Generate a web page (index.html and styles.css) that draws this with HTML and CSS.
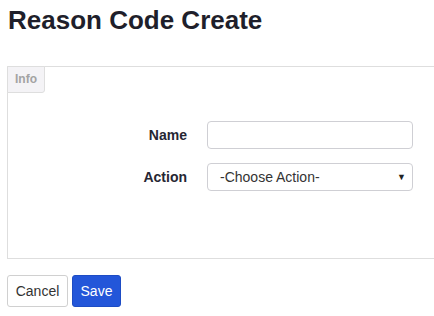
FILE: index.html
```html
<!DOCTYPE html>
<html>
<head>
<meta charset="utf-8">
<link rel="stylesheet" href="styles.css">
</head>
<body>
<h1 class="title">Reason Code Create</h1>
<div class="panel">
  <div class="tab">Info</div>
  <div class="form">
    <div class="row">
      <label class="label">Name</label>
      <div class="input"></div>
    </div>
    <div class="row">
      <label class="label">Action</label>
      <div class="input select"><span>-Choose Action-</span><span class="arrow">▼</span></div>
    </div>
  </div>
</div>
<div class="actions">
  <button class="btn cancel">Cancel</button>
  <button class="btn save">Save</button>
</div>
</body>
</html>
```
FILE: styles.css
```css
html, body { margin: 0; padding: 0; }
body {
  background: #fff;
  font-family: "Liberation Sans", Arial, sans-serif;
  color: #222;
  padding: 0 0 0 7px;
  overflow: hidden;
  width: 434px;
  height: 316px;
  box-sizing: border-box;
}
.title {
  margin: 0;
  padding: 5px 0 0 1px;
  font-size: 26px;
  line-height: 30px;
  font-weight: bold;
  color: #1f1f2b;
}
.panel {
  margin-top: 31px;
  border: 1px solid #dedede;
  border-right: none;
  height: 193px;
  box-sizing: border-box;
}
.tab {
  width: 38px;
  height: 27px;
  margin: -1px 0 0 -1px;
  box-sizing: border-box;
  border: 1px solid #dedede;
  border-radius: 0 0 3px 0;
  background: #f4f3f6;
  color: #a3a3a3;
  font-size: 12px;
  font-weight: bold;
  line-height: 25px;
  padding-left: 7px;
}
.form {
  display: flex;
  flex-direction: column;
  gap: 14px;
  padding-top: 28px;
}
.row {
  display: flex;
  align-items: center;
}
.label {
  width: 179px;
  text-align: right;
  font-size: 14px;
  font-weight: bold;
  color: #262633;
  margin-right: 20px;
}
.input {
  width: 206px;
  height: 28px;
  box-sizing: border-box;
  border: 1px solid #cfcfd4;
  border-radius: 4px;
  background: #fff;
}
.select {
  display: flex;
  align-items: center;
  justify-content: space-between;
  padding: 0 6px 0 12px;
  font-size: 14px;
  color: #333;
}
.arrow {
  font-size: 9px;
  color: #222;
}
.actions {
  display: flex;
  gap: 4px;
  margin-top: 16px;
}
.btn {
  height: 32px;
  font-family: "Liberation Sans", Arial, sans-serif;
  font-size: 14px;
  border-radius: 3px;
  box-sizing: border-box;
  cursor: pointer;
}
.cancel {
  width: 61px;
  background: #fff;
  border: 1px solid #d0d0d0;
  color: #333;
}
.save {
  width: 49px;
  background: #2356d9;
  border: 1px solid #1d4cc4;
  color: #fff;
}
```
